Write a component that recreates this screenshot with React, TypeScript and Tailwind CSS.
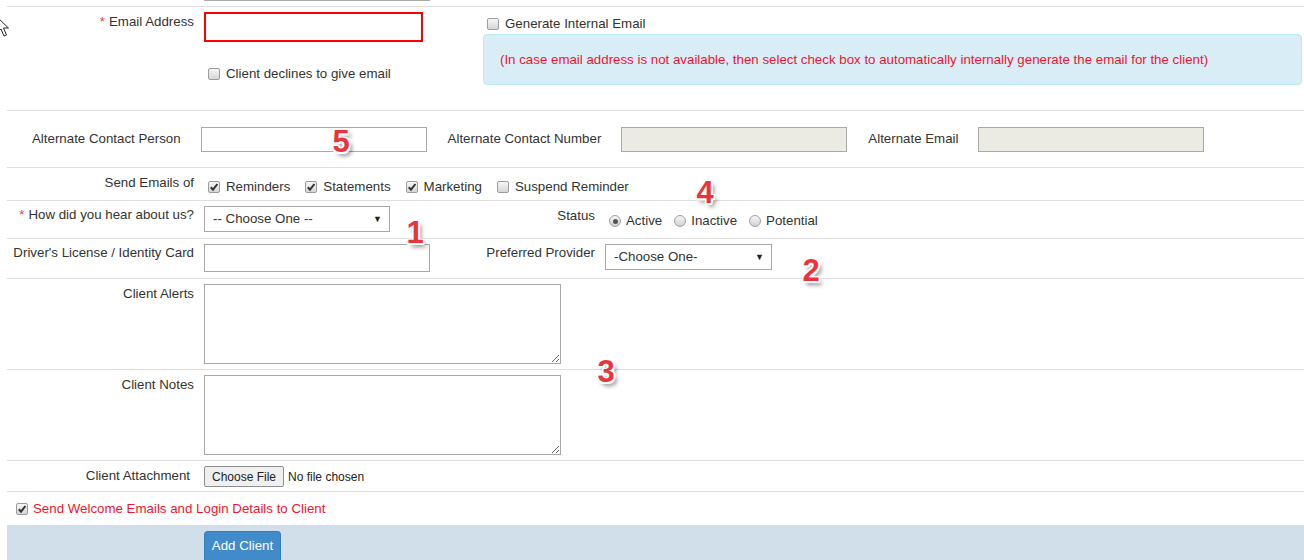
import React from 'react'

const red = 'text-[#f0142d]'

function Check({ on }: { on?: boolean }) {
  return (
    <span className="flex w-[12px] h-[12px] shrink-0 items-center justify-center rounded-[2px] border border-[#9c9c9c] bg-linear-to-b from-[#f6f6f6] to-[#d6d6d6]">
      {on && (
        <svg width="10" height="10" viewBox="0 0 10 10">
          <path d="M1.8 5.2 L4 7.6 L8.4 2" fill="none" stroke="#333" strokeWidth="2" />
        </svg>
      )}
    </span>
  )
}

function Radio({ on }: { on?: boolean }) {
  return (
    <span className="flex w-[12px] h-[12px] shrink-0 items-center justify-center rounded-full border border-[#a0a0a0] bg-linear-to-b from-[#f6f6f6] to-[#d2d2d2]">
      {on && <span className="w-[5px] h-[5px] rounded-full bg-[#555]" />}
    </span>
  )
}

function CheckItem({ on, children }: { on?: boolean; children: React.ReactNode }) {
  return (
    <span className="flex items-center gap-[6px]">
      <Check on={on} />
      <span>{children}</span>
    </span>
  )
}

function Select({ text, w }: { text: string; w: string }) {
  return (
    <div className={`flex items-center justify-between h-[26px] mt-[5px] border border-[#a9a9a9] bg-white pl-[8px] pr-[7px] ${w}`}>
      <span>{text}</span>
      <span className="text-[9px] text-[#222]">▼</span>
    </div>
  )
}

function Star() {
  return <span className="text-[#f33] mr-[4px]">*</span>
}

function Num({ n, x, y }: { n: string; x: string; y: string }) {
  return (
    <span
      className={`absolute ${x} ${y} w-[30px] h-[31px] flex items-center justify-center text-[31px] leading-none font-bold text-[#e9343d] [text-shadow:1.5px_1.5px_0_#fff,-1.5px_-1.5px_0_#fff,1.5px_-1.5px_0_#fff,-1.5px_1.5px_0_#fff,0_2px_0_#fff,2px_0_0_#fff,3px_4px_4px_rgba(0,0,0,0.45)]`}
    >
      {n}
    </span>
  )
}

export default function App() {
  return (
    <div className="relative w-[1304px] h-[560px] overflow-hidden bg-white font-['Liberation_Sans',Arial,sans-serif] text-[13.3px] leading-[16px] text-[#333]">
      <div className="h-[6px] pl-[204px]">
        <div className="w-[226px] h-px bg-[#a9a9a9]" />
      </div>

      <div className="ml-[7px] border-t border-[#dddddd]">
        {/* Email */}
        <div className="flex h-[104px] border-b border-[#dddddd]">
          <div className="w-[187px] pt-[7px] text-right">
            <Star />Email Address
          </div>
          <div className="w-[289px] pl-[10px]">
            <div className="w-[219px] h-[30px] mt-[5px] border-2 border-[#f00] bg-white" />
            <div className="mt-[24px] pl-[4px]">
              <CheckItem>Client declines to give email</CheckItem>
            </div>
          </div>
          <div className="flex-1 mr-[2px]">
            <div className="pt-[9px] pl-[4px]">
              <CheckItem>Generate Internal Email</CheckItem>
            </div>
            <div className={`flex items-center h-[51px] mt-[2px] pl-[16px] rounded-[4px] border border-[#bce8f1] bg-[#d9edf7] ${red}`}>
              (In case email address is not available, then select check box to automatically internally generate the email for the client)
            </div>
          </div>
        </div>

        {/* Alternate contact */}
        <div className="flex items-center h-[57px] pl-[25px] border-b border-[#dddddd]">
          <span>Alternate Contact Person</span>
          <div className="ml-[20px] w-[226px] h-[25px] border border-[#a9a9a9] bg-white" />
          <span className="ml-[21px]">Alternate Contact Number</span>
          <div className="ml-[20px] w-[226px] h-[25px] border border-[#a9a9a9] bg-[#ebebe4]" />
          <span className="ml-[21px]">Alternate Email</span>
          <div className="ml-[20px] w-[226px] h-[25px] border border-[#a9a9a9] bg-[#ebebe4]" />
        </div>

        {/* Send emails */}
        <div className="flex h-[33px] border-b border-[#dddddd]">
          <div className="w-[187px] pt-[7px] text-right">Send Emails of</div>
          <div className="flex gap-[15px] pl-[14px] pt-[5px]">
            <CheckItem on>Reminders</CheckItem>
            <CheckItem on>Statements</CheckItem>
            <CheckItem on>Marketing</CheckItem>
            <CheckItem>Suspend Reminder</CheckItem>
          </div>
        </div>

        {/* Heard / status */}
        <div className="flex h-[38px] border-b border-[#dddddd]">
          <div className="w-[187px] pt-[6px] text-right">
            <Star />How did you hear about us?
          </div>
          <div className="pl-[10px]">
            <Select text="-- Choose One --" w="w-[186px]" />
          </div>
          <div className="w-[205px] pt-[7px] text-right">Status</div>
          <div className="flex gap-[12px] pl-[14px] pt-[3px]">
            <span className="flex items-center gap-[5px]"><Radio on /><span>Active</span></span>
            <span className="flex items-center gap-[5px]"><Radio /><span>Inactive</span></span>
            <span className="flex items-center gap-[5px]"><Radio /><span>Potential</span></span>
          </div>
        </div>

        {/* License / provider */}
        <div className="flex h-[40px] border-b border-[#dddddd]">
          <div className="w-[187px] pt-[6px] text-right">Driver's License / Identity Card</div>
          <div className="pl-[10px]">
            <div className="w-[226px] h-[28px] mt-[5px] border border-[#a9a9a9] bg-white" />
          </div>
          <div className="w-[165px] pt-[6px] text-right">Preferred Provider</div>
          <div className="pl-[10px]">
            <Select text="-Choose One-" w="w-[167px]" />
          </div>
        </div>

        {/* Alerts */}
        <div className="flex h-[91px] border-b border-[#dddddd]">
          <div className="w-[187px] pt-[7px] text-right">Client Alerts</div>
          <div className="pl-[10px]">
            <textarea className="block w-[357px] h-[80px] mt-[5px] border border-[#a9a9a9] bg-white outline-none" />
          </div>
        </div>

        {/* Notes */}
        <div className="flex h-[91px] border-b border-[#dddddd]">
          <div className="w-[187px] pt-[7px] text-right">Client Notes</div>
          <div className="pl-[10px]">
            <textarea className="block w-[357px] h-[80px] mt-[5px] border border-[#a9a9a9] bg-white outline-none" />
          </div>
        </div>

        {/* Attachment */}
        <div className="flex h-[31px] border-b border-[#dddddd]">
          <div className="w-[187px] pt-[7px] pr-[4px] text-right">Client Attachment</div>
          <div className="flex items-start pl-[10px] pt-[5px]">
            <span className="flex items-center h-[21px] px-[7px] rounded-[2px] border border-[#8f8f8f] bg-[#efefef] text-[12px] text-[#222]">Choose File</span>
            <span className="ml-[4px] mt-[3px] text-[12px] text-[#222]">No file chosen</span>
          </div>
        </div>

        {/* Welcome */}
        <div className="flex items-center h-[33px] pl-[9px]">
          <Check on />
          <span className={`ml-[5px] ${red}`}>Send Welcome Emails and Login Details to Client</span>
        </div>

        {/* Footer bar */}
        <div className="h-[35px] bg-[#d1dfea] pl-[197px] pt-[6px]">
          <div className="flex items-center justify-center w-[77px] h-[29px] rounded-t-[4px] border border-b-0 border-[#357ebd] bg-[#428bca] text-white">
            Add Client
          </div>
        </div>
      </div>
      <div className="flex h-px">
        <div className="w-[29px] bg-[#3b1530]" />
        <div className="w-[344px] bg-[#b8b8b8]" />
        <div className="flex-1 bg-[#3b1530]" />
      </div>

      {/* mouse pointer */}
      <svg className="absolute left-[-4px] top-[16px]" width="14" height="22" viewBox="0 0 14 22">
        <path d="M1 1 L1 17 L5 13 L8 20 L10.5 19 L7.5 12 L12.5 12 Z" fill="#fff" stroke="#222" strokeWidth="1" />
      </svg>

      {/* annotations */}
      <Num n="5" x="left-[326px]" y="top-[126px]" />
      <Num n="1" x="left-[400px]" y="top-[217px]" />
      <Num n="4" x="left-[690px]" y="top-[177px]" />
      <Num n="2" x="left-[796px]" y="top-[255px]" />
      <Num n="3" x="left-[591px]" y="top-[356px]" />
    </div>
  )
}
